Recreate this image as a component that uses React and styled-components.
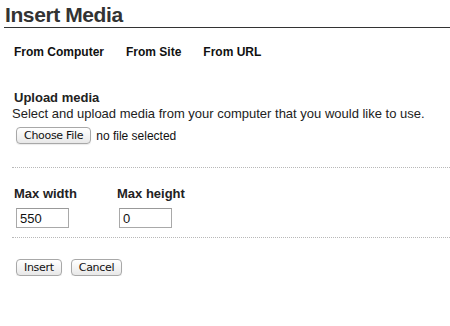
import React from "react";
import styled, { createGlobalStyle } from "styled-components";

const GlobalStyle = createGlobalStyle`
  body {
    margin: 0;
    background: #fff;
    font-family: "Liberation Sans", Arial, sans-serif;
    color: #222;
  }
`;

const Page = styled.div`
  width: 450px;
  overflow: hidden;
`;

const Title = styled.h1`
  margin: 0 0 0 4px;
  padding: 2px 0 0 1px;
  font-size: 21px;
  letter-spacing: -0.4px;
  line-height: 25px;
  font-weight: bold;
  color: #333;
  border-bottom: 1px solid #333;
`;

const Tabs = styled.nav`
  display: flex;
  gap: 22px;
  margin-top: 16px;
  padding-left: 14px;
`;

const Tab = styled.a`
  font-size: 12px;
  line-height: 16px;
  font-weight: bold;
  color: #111;
  text-decoration: none;
`;

const Form = styled.form`
  margin: 30px 0 0 12px;
`;

const Label = styled.div`
  font-size: 13px;
  line-height: 16px;
  font-weight: bold;
  color: #222;
  padding-left: 2px;
`;

const Help = styled.p`
  margin: 0;
  font-size: 13px;
  line-height: 16px;
  color: #222;
`;

const FileRow = styled.div`
  display: flex;
  align-items: center;
  gap: 5px;
  margin-top: 5px;
  padding-left: 4px;
`;

const MacButton = styled.button`
  height: 17px;
  padding: 0 7px;
  border: 1px solid #a8a8a8;
  border-radius: 4px;
  background: linear-gradient(#ffffff, #f4f4f4 50%, #e8e8e8);
  box-shadow: 0 1px 1px rgba(0, 0, 0, 0.08);
  font-family: "DejaVu Sans", "Liberation Sans", sans-serif;
  font-size: 11px;
  letter-spacing: -0.3px;
  color: #111;
  line-height: 1;
`;

const NoFile = styled.span`
  font-size: 12px;
  color: #111;
`;

const Divider = styled.hr`
  margin: ${(p) => p.$top || 0}px 0 0;
  border: 0;
  border-top: 1px dotted #b8b8b8;
`;

const Dims = styled.div`
  display: grid;
  grid-template-columns: 103px 103px;
  margin: 18px 0 9px;
`;

const Field = styled.div`
  display: flex;
  flex-direction: column;
  align-items: flex-start;
  gap: 6px;
`;

const TextInput = styled.input`
  box-sizing: border-box;
  width: 53px;
  height: 20px;
  margin-left: 4px;
  padding: 0 3px;
  border: 1px solid #a9a9a9;
  border-top-color: #999;
  font-family: "Liberation Sans", Arial, sans-serif;
  font-size: 13px;
  color: #111;
  outline: none;
`;

const Actions = styled.div`
  display: flex;
  gap: 9px;
  margin-top: 21px;
  padding-left: 4px;
`;

export default function App() {
  return (
    <Page>
      <GlobalStyle />
      <Title>Insert Media</Title>
      <Tabs>
        <Tab>From Computer</Tab>
        <Tab>From Site</Tab>
        <Tab>From URL</Tab>
      </Tabs>
      <Form onSubmit={(e) => e.preventDefault()}>
        <Label>Upload media</Label>
        <Help>Select and upload media from your computer that you would like to use.</Help>
        <FileRow>
          <MacButton type="button">Choose File</MacButton>
          <NoFile>no file selected</NoFile>
        </FileRow>
        <Divider $top={23} />
        <Dims>
          <Field>
            <Label>Max width</Label>
            <TextInput defaultValue="550" />
          </Field>
          <Field>
            <Label>Max height</Label>
            <TextInput defaultValue="0" />
          </Field>
        </Dims>
        <Divider />
        <Actions>
          <MacButton type="submit">Insert</MacButton>
          <MacButton type="button">Cancel</MacButton>
        </Actions>
      </Form>
    </Page>
  );
}
